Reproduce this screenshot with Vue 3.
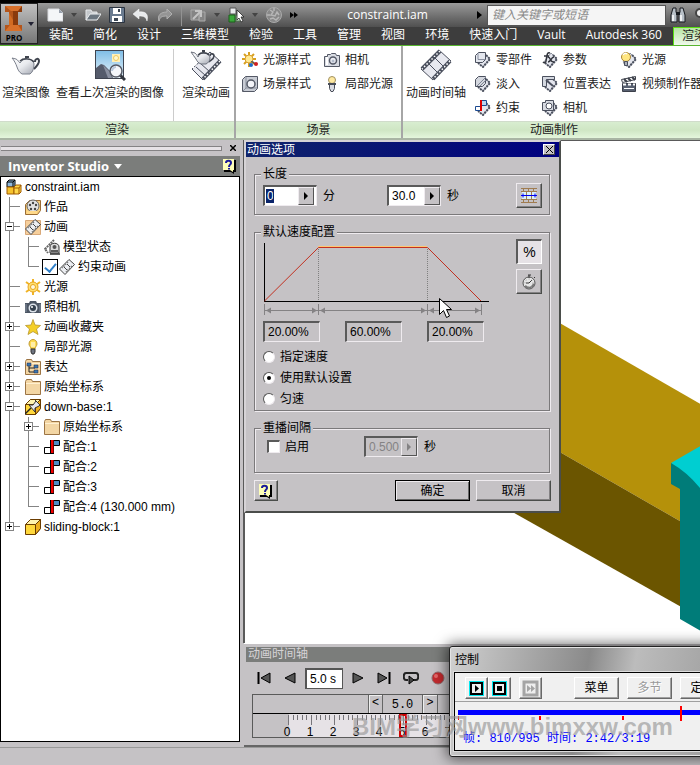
<script setup>
import { ref } from 'vue'

const tabs = ['装配', '简化', '设计', '三维模型', '检验', '工具', '管理', '视图', '环境', '快速入门', 'Vault', 'Autodesk 360']

const sceneTools = [
  { icon: 'light-style', label: '光源样式' },
  { icon: 'camera', label: '相机' },
  { icon: 'scene-style', label: '场景样式' },
  { icon: 'spot', label: '局部光源' }
]

const animationTools = [
  { icon: 'a-part', label: '零部件' },
  { icon: 'a-param', label: '参数' },
  { icon: 'a-light', label: '光源' },
  { icon: 'a-fade', label: '淡入' },
  { icon: 'a-pos', label: '位置表达' },
  { icon: 'clapper', label: '视频制作器' },
  { icon: 'a-constraint', label: '约束' },
  { icon: 'a-camera', label: '相机' }
]

// guides: t = tee, l = pass-through line, e = last child, + / - = toggles, p = last toggle
const tree = [
  { guides: '', icon: 'assembly', label: 'constraint.iam' },
  { guides: 't', icon: 'reel', label: '作品' },
  { guides: '-', icon: 'film-folder', label: '动画' },
  { guides: 'lt', icon: 'model-state', label: '模型状态' },
  { guides: 'le', icon: 'film-small', label: '约束动画', check: true },
  { guides: 't', icon: 'sun', label: '光源' },
  { guides: 't', icon: 'photo', label: '照相机' },
  { guides: '+', icon: 'star', label: '动画收藏夹' },
  { guides: 't', icon: 'bulb', label: '局部光源' },
  { guides: '+', icon: 'rep-folder', label: '表达' },
  { guides: '+', icon: 'folder', label: '原始坐标系' },
  { guides: '-', icon: 'pinned', label: 'down-base:1' },
  { guides: 'l+', icon: 'folder', label: '原始坐标系' },
  { guides: 'lt', icon: 'mate', label: '配合:1' },
  { guides: 'lt', icon: 'mate', label: '配合:2' },
  { guides: 'lt', icon: 'mate', label: '配合:3' },
  { guides: 'le', icon: 'mate', label: '配合:4 (130.000 mm)' },
  { guides: 'p', icon: 'part', label: 'sliding-block:1' }
]

const isToggle = (g) => '+-p'.includes(g)
const minutes = ref('0')
const seconds = ref('30.0')
const interval = ref('0.500')
const speeds = ref(['20.00%', '60.00%', '20.00%'])
const mode = ref('使用默认设置')
const modes = ['指定速度', '使用默认设置', '匀速']
const repeat = ref(false)
const current = ref('5.0 s')
const ticks = Array.from({ length: 50 }, (_, i) => i)
</script>

<template>
  <div class="app">
    <svg width="0" height="0" class="defs" aria-hidden="true">
      <defs>
        <linearGradient id="pot" x1="0" y1="0" x2="1" y2="1"><stop offset="0" stop-color="#fff" /><stop offset="0.500" stop-color="#e8eaee" /><stop offset="1" stop-color="#a4a8b2" /></linearGradient>
        <linearGradient id="sky" x1="0" y1="0" x2="0" y2="1"><stop offset="0" stop-color="#7fbde6" /><stop offset="1" stop-color="#eaf5fb" /></linearGradient>
      </defs>
      <symbol id="teapot" viewBox="0 0 32 32">
        <path d="M25 13c0-4 4-4 4-1s-2 5-5 8" fill="none" stroke="#3f444e" stroke-width="2" />
        <path d="M2 9l4 1c2 1 3 3 4 4 2-3 4-4 7-4s7 2 7 5c0 4-1 8-4 10h-8c-3-2-4-4-5-7C6 15 4 11 2 9z" fill="url(#pot)" stroke="#7b808c" />
        <path d="M10 12c3-3 11-3 14 1" fill="none" stroke="#3f444e" stroke-width="1.500" /><path d="M15 7h4v2h-4z" fill="#3f444e" />
      </symbol>
      <symbol id="viewimg" viewBox="0 0 32 32">
        <rect x="1.500" y="1.500" width="28" height="28" fill="url(#sky)" stroke="#3f4450" />
        <path d="M18 5h8v8h-8z" fill="#fff0b8" /><circle cx="22" cy="9" r="2.500" fill="#fff8d0" stroke="#f0c860" />
        <path d="M2 19l5-4 3 1 6 6 3 7H2z" fill="#555b6b" /><path d="M9 16l7 7 2 6h-4z" fill="#8a90a0" />
        <path d="M26 26l5 5" stroke="#33363e" stroke-width="3" /><circle cx="22" cy="22" r="6" fill="#f4f6fa" stroke="#555a66" stroke-width="1.500" />
        <path d="M18 22c0-2 2-4 4-4" stroke="#b8c8dc" fill="none" stroke-width="2" />
      </symbol>
      <symbol id="film" viewBox="0 0 32 32">
        <path d="M19 1L31 12 13 31 1 20z" fill="#e8e9f0" stroke="#4b505e" />
        <path d="M20 2L2 20M30 12L13 30" stroke="#4b505e" stroke-width="4" />
        <path d="M20 2L2 20M30 12L13 30" stroke="#fff" stroke-width="1.500" stroke-dasharray="1.500 2" />
        <path d="M14 8l10 10M8 14l10 10" stroke="#4b505e" />
      </symbol>
      <symbol id="render-anim" viewBox="0 0 32 32">
        <path d="M20 3L31 13 13 31 2 20z" fill="#e8e9f0" stroke="#4b505e" />
        <path d="M30 12L13 30" stroke="#4b505e" stroke-width="4" /><path d="M30 12L13 30M3 19l5-5" stroke="#fff" stroke-width="1.500" stroke-dasharray="1.500 2" />
        <path d="M10 14l10 9M6 18l10 9" stroke="#4b505e" />
        <path d="M20 7c0-3 4-3 4 0s-3 4-5 6" stroke="#3f444e" fill="none" stroke-width="1.500" />
        <path d="M1 3l4 1c1 1 2 2 3 4 1-3 3-4 6-4s6 2 6 5-2 5-4 6h-5c-3-1-4-3-5-5C4 8 3 5 1 3z" fill="url(#pot)" stroke="#6b707c" />
        <path d="M8 6c3-3 8-3 11 0" stroke="#3f444e" fill="none" stroke-width="1.500" /><path d="M12 1h3v2h-3z" fill="#3f444e" />
      </symbol>
      <symbol id="light-style" viewBox="0 0 16 16">
        <path d="M7 0v15M0 7h14M2 2l10 10M12 2L2 12" stroke="#d8a020" stroke-width="2" /><circle cx="7" cy="7" r="4" fill="#ffe890" stroke="#d8a030" />
        <path d="M9 10c3-2 4 5 6 1" fill="none" stroke="#555" stroke-width="1.500" /><circle cx="9" cy="13" r="2" fill="#1e6cc8" /><circle cx="14" cy="12" r="2" fill="#d02020" />
      </symbol>
      <symbol id="camera" viewBox="0 0 16 16">
        <path d="M0.500 4.500h3v-2h3l1-1h4l1 2h3v11h-15z" fill="#d8dbe2" stroke="#545966" /><path d="M3 5v8" stroke="#fff" stroke-width="2" />
        <circle cx="9" cy="8.500" r="3.500" fill="#eef0f6" stroke="#545966" stroke-width="1.500" /><circle cx="9" cy="9" r="1.500" fill="#b4bccb" />
      </symbol>
      <symbol id="scene-style" viewBox="0 0 16 16">
        <path d="M0.500 3.500l3-3h12v12l-3 3h-12z" fill="#c8ccd4" stroke="#545966" /><path d="M4 1v11h11M4 12l-3 3" fill="none" stroke="#8a909c" />
        <circle cx="9" cy="8" r="4" fill="#f4f5f9" stroke="#545966" stroke-width="1.500" />
      </symbol>
      <symbol id="spot" viewBox="0 0 16 16">
        <circle cx="8" cy="4" r="3.500" fill="#ffe9a0" stroke="#a09060" /><path d="M5.500 7.500h5v5l-1.500 3h-2l-1.500-3z" fill="#d9dbe2" stroke="#484c58" /><path d="M4 8h8" stroke="#484c58" stroke-width="2" />
      </symbol>
      <symbol id="dia" viewBox="0 0 16 16">
        <path d="M9 1l6 6-7 8-6-5z" fill="#e4e6ee" stroke="#8b909c" /><path d="M11 3l4 4-7 8-5-4" stroke="#4b505e" stroke-width="2" stroke-dasharray="2 1" fill="none" />
      </symbol>
      <symbol id="a-part" viewBox="0 0 16 16"><use href="#dia" /><path d="M0.500 3.500l3-3h7v7l-3 3h-7z" fill="#e4e7ee" stroke="#4b505e" /><path d="M3 1v6.500h7" fill="none" stroke="#8a90a0" /></symbol>
      <symbol id="a-fade" viewBox="0 0 16 16"><use href="#dia" /><path d="M0.500 3.500l3-3h7v7l-3 3h-7z" fill="#d4d7de" stroke="#4b505e" /><path d="M2 10L11 1M5 10l6-6" stroke="#7d8494" /></symbol>
      <symbol id="a-constraint" viewBox="0 0 16 16"><use href="#dia" /><path d="M6.500 0.500h5v5h-5z" fill="#b8d4f0" stroke="#1c4a90" /><path d="M0.500 6.500h5v4h-5z" fill="#fff" stroke="#1c4a90" /><path d="M6 0v11" stroke="#e00000" stroke-width="2" /></symbol>
      <symbol id="a-param" viewBox="0 0 16 16"><use href="#dia" /><path d="M8 1C5 0 5 3 4 9c0 2-2 2-3 1M2 4h5M6 5c3 0 2 6 6 5M12 5c-3 0-3 5-6 5" fill="none" stroke="#33363e" stroke-width="1.500" /></symbol>
      <symbol id="a-pos" viewBox="0 0 16 16"><use href="#dia" /><path d="M0.500 0.500h12v3h-8v7h-4z" fill="#d4d8e0" stroke="#4b505e" /><path d="M4 4l7 6" stroke="#4b505e" stroke-width="2" /></symbol>
      <symbol id="a-camera" viewBox="0 0 16 16"><use href="#dia" /><path d="M0.500 2.500h3v-2h8v10h-11z" fill="#d8dbe2" stroke="#4b505e" /><circle cx="7" cy="6" r="3" fill="#fff" stroke="#4b505e" /></symbol>
      <symbol id="a-light" viewBox="0 0 16 16"><use href="#dia" /><circle cx="5" cy="5" r="4.500" fill="#ffe680" stroke="#a88430" /><path d="M2 3c1-2 3-2 4-1" stroke="#fff" fill="none" stroke-width="1.500" /><path d="M3.500 9.500h3v4h-3z" fill="#aab0bb" stroke="#4b505e" /></symbol>
      <symbol id="clapper" viewBox="0 0 16 16"><path d="M0.500 3.500l14-3v3l-13 3z" fill="#fff" stroke="#3c404a" /><path d="M3 3l3 3M7 2l3 3M11 1l3 3" stroke="#3c404a" stroke-width="2" /><path d="M1.500 7.500h13v8h-13z" fill="#586070" stroke="#3c404a" /><path d="M2 8.500h12" stroke="#fff" stroke-width="2" stroke-dasharray="3 2" /><path d="M3 12.500h10" stroke="#fff" /></symbol>

      <symbol id="new" viewBox="0 0 16 16"><path d="M1 2h11l4 4v8H1z" fill="#f4f6f8" stroke="#d8dade" /><path d="M12 2v4h4z" fill="#9aa2ae" /></symbol>
      <symbol id="open" viewBox="0 0 16 16"><path d="M1 13V3h5l1 2h5v2" fill="#c4c8cc" stroke="#e8eaec" /><path d="M1 13L5 7h11l-4 6z" fill="#6b7680" stroke="#f0f2f4" /></symbol>
      <symbol id="save" viewBox="0 0 16 16"><path d="M0.500 0.500h15v15h-15z" fill="#6a7b90" stroke="#2c3440" /><path d="M4 1h8v6H4zM3 9h10v6H3z" fill="#fff" /><path d="M9 2h2v3H9zM5 11h4v3H5z" fill="#3c4654" /></symbol>
      <symbol id="undo" viewBox="0 0 16 16"><path d="M6 2v3c6-1 10 2 8 9-1-4-3-5-8-5v3L0 7z" fill="#e8eaec" stroke="#fff" stroke-width="0.500" /></symbol>
      <symbol id="redo" viewBox="0 0 16 16"><path d="M10 2v3C4 5 0 8 2 14c1-4 3-5 8-5v3l5-5z" fill="#959595" stroke="#b0b0b0" /></symbol>
      <symbol id="update" viewBox="0 0 16 16"><path d="M1 3h9l-1 10H1zM9 5h6v9H9z" fill="#858585" stroke="#aaa" /><path d="M3 12l8-8M5 4h6v6" stroke="#c4c4c4" stroke-width="2" fill="none" /></symbol>
      <symbol id="select" viewBox="0 0 16 16"><path d="M2 1h6v6H2z" fill="#e8eaec" stroke="#555" /><path d="M1 8h6v7H1z" fill="#3aa83a" stroke="#1b601b" /><path d="M8 8h5v6H8z" fill="#e0e8e0" stroke="#4b7b4b" /><path d="M9 3v10l2-2 2 4 2-1-2-4h3z" fill="#fff" stroke="#222" stroke-width="0.800" /></symbol>
      <symbol id="sphere" viewBox="0 0 16 16"><circle cx="8" cy="8" r="7.500" fill="#888" stroke="#aaa" /><path d="M4 3l3 2-2 3 4 1 2-4 2 3M4 12l3-1 3 2 3-3M1 8h3M8 1v3" stroke="#b6b6b6" fill="none" stroke-width="1.500" /></symbol>
      <symbol id="binoc" viewBox="0 0 16 16"><path d="M3 1h3v4l1 2v8H1V8zM13 1h-3v4L9 7v8h6V8z" fill="#b8c0c8" stroke="#16191e" /><path d="M6 5h4v3H6z" fill="#16191e" /><path d="M3 8v6M11 8v6" stroke="#fff" stroke-width="1.500" /></symbol>
      <symbol id="logo" viewBox="0 0 20 28"><path d="M1 1h17v6h-4v13h4v6H1v-6h4V7H1z" fill="#b4551a" /><path d="M7 1h11v6h-4v13h-5V7z" fill="#8a3a0c" /><path d="M1 1l6 5h7l4-5zM1 26l5-6h8l4 6z" fill="#d8702a" /><path d="M5 8l4 7v5H5z" fill="#d26b22" /></symbol>

      <symbol id="assembly" viewBox="0 0 16 16"><path d="M1 3l2-2h6v7H1z" fill="#8fb8dc" stroke="#000" /><path d="M1 3h6v5M7 3l2-2" fill="none" stroke="#000" /><path d="M1 8h7v7H1z" fill="#f6c22c" stroke="#a05a00" /><path d="M8 8l2-2h5v7l-2 2H8z" fill="#ffd84a" stroke="#a05a00" /><path d="M8 9h5v6M13 9l2-3" fill="none" stroke="#a05a00" /></symbol>
      <symbol id="folder" viewBox="0 0 16 16"><path d="M0.500 15.500v-13l1-2h5l1 2h8v13z" fill="#f3d6a4" stroke="#9c7444" /><path d="M1 4.500h14" stroke="#fff0d0" /></symbol>
      <symbol id="rep-folder" viewBox="0 0 16 16"><use href="#folder" /><path d="M4 7v6h5M4 9h6" fill="none" stroke="#222" /><path d="M2 4h4v3H2zM9 6h4v3H9zM9 11h4v3H9z" fill="#3b78ae" stroke="#224" stroke-width="0.500" /></symbol>
      <symbol id="reel" viewBox="0 0 16 16"><path d="M0.500 5.500l4-4h11v10l-3 4h-12z" fill="#f8cf7c" stroke="#9a6c34" /><circle cx="8" cy="7" r="6" fill="#e2e2e2" stroke="#666" /><g fill="#444"><circle cx="8" cy="4" r="1.200" /><circle cx="5" cy="6" r="1.200" /><circle cx="11" cy="6" r="1.200" /><circle cx="6" cy="10" r="1.200" /><circle cx="10" cy="10" r="1.200" /></g><path d="M2 13.500h10" stroke="#ffd98a" stroke-width="3" /></symbol>
      <symbol id="film-small" viewBox="0 0 16 16"><path d="M10 0.500l5.500 5L6 15.500.5 10z" fill="#eceef2" stroke="#444" /><path d="M9 3L3 9M13 7l-6 6" stroke="#777" stroke-width="1.500" stroke-dasharray="1.500 1" /><path d="M8 5l3 3M5 8l3 3" stroke="#444" /></symbol>
      <symbol id="film-folder" viewBox="0 0 16 16"><path d="M0.500 15.500v-14h15v14z" fill="#f6cf9c" stroke="#d8a878" /><use href="#film-small" /></symbol>
      <symbol id="model-state" viewBox="0 0 16 16"><path d="M10 1L1 10l3 4" fill="none" stroke="#666" stroke-width="2" stroke-dasharray="2 0.700" /><path d="M6 14V8c0-5 9-5 9 0v6z" fill="#ddd" stroke="#333" /><circle cx="10.500" cy="8" r="2" fill="#555" /><path d="M7 12h7M6 15h10" stroke="#333" stroke-width="1.500" /></symbol>
      <symbol id="sun" viewBox="0 0 16 16"><path d="M8 0v16M1 3l14 10M1 13L15 3" stroke="#f0b428" stroke-width="2" /><circle cx="8" cy="8" r="5" fill="#ffdf70" stroke="#e8a41c" /><circle cx="8" cy="8" r="2.500" fill="#fff8dc" stroke="#e8a41c" /></symbol>
      <symbol id="photo" viewBox="0 0 16 16"><path d="M0 4h4l1-2h6l1 2h4v10H0z" fill="#4c5664" /><path d="M1 5v8M15 5v8" stroke="#8490a0" /><circle cx="8" cy="9" r="4.500" fill="#dde3ea" /><circle cx="8" cy="9" r="3" fill="#34404e" /><circle cx="7" cy="8" r="1" fill="#fff" /></symbol>
      <symbol id="star" viewBox="0 0 16 16"><path d="M8 0.500l2 5.500 5.500 0.500-4 3.500 1.500 5.500-5-3-5 3L4.500 10l-4-3.500L6 6z" fill="#f4cf28" stroke="#b8952c" stroke-width="0.800" /></symbol>
      <symbol id="bulb" viewBox="0 0 16 16"><path d="M4 5c0-6 8-6 8 0 0 2-2 3-2 5H6C6 8 4 7 4 5z" fill="#ffdc50" stroke="#c09a30" /><path d="M7 3v5M9 3v5" stroke="#fff" /><path d="M6 10h4v3l-1 2H7l-1-2z" fill="#6e7480" stroke="#333" /></symbol>
      <symbol id="part" viewBox="0 0 16 16"><path d="M0.500 5.500l5-5h10v9l-5 6h-10z" fill="#ffd83c" stroke="#6a3c00" /><path d="M5.500 0.500h10l-5 5h-10z" fill="#fff4b0" stroke="#6a3c00" /><path d="M10.500 5.500v10l5-6v-9z" fill="#eeb020" stroke="#6a3c00" /></symbol>
      <symbol id="pinned" viewBox="0 0 16 16"><use href="#part" /><path d="M0 15l6-6" stroke="#222" stroke-width="1.500" /><path d="M4 6l4 0 3-4-1-1 5 5-1 1-4 2v4z" fill="#e6e8ec" stroke="#333" /></symbol>
      <symbol id="mate" viewBox="0 0 16 16"><path d="M8 1.500h7.500v5H8z" fill="#4f8cc4" stroke="#000" /><path d="M7 8.500H.5v6H7z" fill="#fff" stroke="#000" /><path d="M6 1h4v14H6z" fill="#000" /><path d="M7 1h2.500v13H7z" fill="#f00000" /></symbol>
      <symbol id="help" viewBox="0 0 16 16"><path d="M2 2h12v12h-2v2l-3-2H2z" fill="#000" /><path d="M1 1h11v11h-1v2l-3-2H1z" fill="#ffffb8" /><path d="M4 5c0-3 5-3 5 0 0 2-2 1-2 4M7 10v1.500" fill="none" stroke="#1a1a9a" stroke-width="2" /></symbol>
    </svg>

    <header class="top">
      <button class="app-button" aria-label="PRO">
        <span class="app-mark"><svg width="20" height="28"><use href="#logo" /></svg>PRO</span>
        <i class="down"></i>
      </button>
      <div class="bars">
        <div class="quick">
          <button class="ic" aria-label="新建"><svg><use href="#new" /></svg></button><i class="down dim"></i>
          <button class="ic" aria-label="打开"><svg><use href="#open" /></svg></button>
          <button class="ic" aria-label="保存"><svg><use href="#save" /></svg></button>
          <button class="ic" aria-label="撤消"><svg><use href="#undo" /></svg></button>
          <button class="ic" aria-label="重做"><svg><use href="#redo" /></svg></button>
          <i class="sep"></i>
          <button class="ic" aria-label="更新"><svg><use href="#update" /></svg></button><i class="down dim"></i>
          <button class="ic" aria-label="选择"><svg><use href="#select" /></svg></button><i class="down dim"></i>
          <button class="ic" aria-label="外观"><svg><use href="#sphere" /></svg></button>
          <svg class="more" width="8" height="8"><path d="M0 1l4 3-4 3zM4 1l4 3-4 3z" /></svg>
          <span class="doc">constraint.iam</span>
          <svg class="go" width="5" height="8"><path d="M0 0l5 4-5 4z" /></svg>
          <input class="search" type="text" placeholder="键入关键字或短语" aria-label="搜索">
          <button class="ic" aria-label="查找"><svg><use href="#binoc" /></svg></button>
          <svg class="key" width="12" height="16"><circle cx="6" cy="6" r="4" fill="#eee" stroke="#444" stroke-width="2" /></svg>
        </div>
        <nav class="tabs">
          <a v-for="t in tabs" :key="t" href="#">{{ t }}</a>
          <a href="#" class="active">渲染</a>
        </nav>
      </div>
    </header>

    <section class="ribbon">
      <div class="panel render">
        <div class="tools">
          <button class="big"><svg><use href="#teapot" /></svg>渲染图像</button>
          <button class="big"><svg><use href="#viewimg" /></svg>查看上次渲染的图像</button>
          <i class="rule"></i>
          <button class="big"><svg><use href="#render-anim" /></svg>渲染动画</button>
        </div>
        <h2>渲染</h2>
      </div>
      <div class="panel scene-panel">
        <div class="tools">
          <div class="grid two">
            <button v-for="t in sceneTools" :key="t.label" class="small"><svg><use :href="'#' + t.icon" /></svg>{{ t.label }}</button>
          </div>
        </div>
        <h2>场景</h2>
      </div>
      <div class="panel anim">
        <div class="tools">
          <button class="big"><svg><use href="#film" /></svg>动画时间轴</button>
          <div class="grid three">
            <button v-for="t in animationTools" :key="t.icon" class="small"><svg><use :href="'#' + t.icon" /></svg>{{ t.label }}</button>
          </div>
        </div>
        <h2>动画制作</h2>
      </div>
    </section>

    <main class="work">
      <aside class="browser">
        <div class="grip"><i></i><button class="x" aria-label="关闭"><svg width="6" height="6"><path d="M0 0l6 6M6 0L0 6" stroke="#000" stroke-width="1.500" /></svg></button></div>
        <div class="browser-head">
          <button class="studio">Inventor Studio <i></i></button>
          <button class="ic" aria-label="帮助"><svg><use href="#help" /></svg></button>
        </div>
        <ul class="tree">
          <li v-for="(n, i) in tree" :key="i">
            <component :is="isToggle(g) ? 'button' : 'span'" v-for="(g, k) in n.guides" :key="k" class="guide" :aria-label="isToggle(g) ? '展开或折叠' : null">
              <svg width="19" height="20">
                <path :d="g === 'e' || g === 'p' ? 'M4.5 0V10' : 'M4.5 0V20'" stroke="#848484" />
                <path v-if="g !== 'l'" d="M4 9.500H15" stroke="#848484" />
                <template v-if="isToggle(g)">
                  <rect x="0.500" y="5.500" width="8" height="8" fill="#fff" stroke="#848484" />
                  <path d="M2 9.500h5" stroke="#000" />
                  <path v-if="g !== '-'" d="M4.500 7v5" stroke="#000" />
                </template>
              </svg>
            </component>
            <input v-if="n.check" type="checkbox" class="node-check" checked :aria-label="n.label">
            <svg class="node-icon"><use :href="'#' + n.icon" /></svg>
            <span>{{ n.label }}</span>
          </li>
        </ul>
      </aside>

      <div class="stage">
        <div class="viewport">
          <svg width="600" height="502" aria-hidden="true">
            <path d="M200 116L600 346V475L200 245z" fill="#b5910a" />
            <path d="M200 245L600 475V558L200 333z" fill="#6b5500" />
            <path d="M426 322L600 222V440L455 348z" fill="#00ced1" />
            <path d="M426 322Q442 331 455 347L600 431V573L435 478V348L426 343z" fill="#007c79" />
          </svg>
        </div>
        <section class="timeline">
          <h3>动画时间轴</h3>
          <div class="transport">
            <button aria-label="到开头"><svg width="14" height="12"><path d="M1.500 0v12" stroke="#000" stroke-width="2" /><path d="M13 1v10L4 6z" fill="#555" stroke="#000" /></svg></button>
            <button aria-label="倒播"><svg width="14" height="12"><path d="M12 1v10L2 6z" fill="#555" stroke="#000" /></svg></button>
            <input v-model="current" type="text" aria-label="当前时间">
            <button aria-label="播放"><svg width="14" height="12"><path d="M2 1v10l10-5z" fill="#555" stroke="#000" /></svg></button>
            <button aria-label="到结尾"><svg width="14" height="12"><path d="M12.500 0v12" stroke="#000" stroke-width="2" /><path d="M1 1v10l9-5z" fill="#555" stroke="#000" /></svg></button>
            <button aria-label="循环"><svg width="16" height="14"><path d="M5 9H3C0 9 0 2 3 2h10c3 0 3 7 0 7h-3" fill="none" stroke="#222" stroke-width="2" /><path d="M6 5l5 4-5 4z" fill="#444" stroke="#000" /></svg></button>
            <button aria-label="录制"><svg width="14" height="14"><circle cx="7" cy="7" r="6" fill="#c22a2e" stroke="#8e6a6c" /><circle cx="5" cy="5" r="2" fill="#e2686a" /></svg></button>
          </div>
          <div class="track">
            <div class="slider"><button aria-label="后退">&lt;</button><output>5.0</output><button aria-label="前进">&gt;</button></div>
            <div class="ruler">
              <svg width="240" height="23">
                <path d="M1 0h239v23H1z" fill="#e6e2e6" />
                <path v-for="t in ticks" :key="t" :d="`M${Math.round(t * 4.6)}.5 1V${t % 5 ? 6 : 11}`" stroke="#77757a" />
                <text v-for="n in 10" :key="n" :x="(n - 1) * 23 - 1" y="22">{{ n - 1 }}</text>
                <rect x="112" y="1" width="6" height="21" fill="none" stroke="#d00000" stroke-width="2" />
              </svg>
            </div>
          </div>
        </section>
      </div>
    </main>
    <footer class="status"></footer>

    <form class="dialog" role="dialog" aria-label="动画选项" @submit.prevent>
      <div class="caption"><span>动画选项</span><button type="button" aria-label="关闭"><svg width="7" height="7"><path d="M0 0l7 7M7 0L0 7" stroke="#000" /></svg></button></div>
      <div class="content">
        <fieldset class="length">
          <legend>长度</legend>
          <div class="line">
            <div class="spin"><input id="min" v-model="minutes" type="text" class="picked" size="1"><button type="button" aria-label="选择分"><svg width="4" height="8"><path d="M0 0l4 4-4 4z" /></svg></button></div>
            <label for="min">分</label>
            <div class="spin second"><input id="sec" v-model="seconds" type="text" size="4"><button type="button" aria-label="选择秒"><svg width="4" height="8"><path d="M0 0l4 4-4 4z" /></svg></button></div>
            <label for="sec">秒</label>
            <button type="button" class="square push" aria-label="适合动画长度">
              <svg width="18" height="15"><path d="M1 0.500h16M1 3.500h16M1 11.500h16M1 14.500h16" stroke="#a07c50" /><path d="M3.500 0v4M8.500 0v4M13.500 0v4M3.500 11v4M8.500 11v4M13.500 11v4" stroke="#a07c50" /><path d="M2 4h14v7H2z" fill="#d9f0fa" /><path d="M6.500 4v7M11.500 4v7" stroke="#a07c50" /><path d="M1 7.500h16M3 5.500v4M15 5.500v4" stroke="#0000f0" /></svg>
            </button>
          </div>
        </fieldset>

        <fieldset class="profile">
          <legend>默认速度配置</legend>
          <div class="profile-body">
            <div>
              <svg class="graph" width="228" height="76" aria-hidden="true">
                <path d="M55.500 6v53M164.500 6v53" stroke="#808080" stroke-dasharray="1 1" />
                <path d="M1 58.500H226M1.500 0v59" stroke="#000" />
                <path d="M55 3.500H164" stroke="#ffc870" />
                <path d="M1.500 58L55.500 4.500H164.500L218 58" fill="none" stroke="#c23020" />
                <path d="M1.500 61v11M55.500 61v11M164.500 61v11M218.500 61v11M2 67.500h217" stroke="#848284" />
                <path d="M3 67.500l5-3v6zM54 67.500l-5-3v6zM57 67.500l5-3v6zM163 67.500l-5-3v6zM166 67.500l5-3v6zM217 67.500l-5-3v6z" fill="#848284" />
              </svg>
              <div class="speeds"><input v-for="(s, i) in speeds" :key="i" v-model="speeds[i]" type="text" readonly :aria-label="'速度段 ' + (i + 1)"></div>
              <label v-for="m in modes" :key="m" class="radio"><input v-model="mode" type="radio" name="mode" :value="m">{{ m }}</label>
            </div>
            <div class="units">
              <button type="button" class="square sunken">%</button>
              <button type="button" class="square push" aria-label="时间"><svg width="16" height="16"><circle cx="8" cy="9" r="6" fill="#e6e6e6" stroke="#555" /><path d="M4 12c3 3 7 2 9-2" stroke="#777" stroke-width="2" fill="none" /><path d="M8 9l3-3M8 9H5M7 1h3M8 1v3M13 3l1 1" stroke="#333" /><circle cx="8" cy="9" r="4" fill="none" stroke="#999" stroke-dasharray="1 2" /></svg></button>
            </div>
          </div>
        </fieldset>

        <fieldset class="replay">
          <legend>重播间隔</legend>
          <div class="line">
            <label class="check"><input v-model="repeat" type="checkbox">启用</label>
            <div class="spin off"><input id="gap" v-model="interval" type="text" size="5" disabled><button type="button" disabled aria-label="选择间隔"><svg width="4" height="8"><path d="M0 0l4 4-4 4z" /></svg></button></div>
            <label for="gap">秒</label>
          </div>
        </fieldset>

        <div class="actions">
          <button type="button" class="push help" aria-label="帮助"><svg width="16" height="16"><use href="#help" /></svg></button>
          <button type="submit" class="push default">确定</button>
          <button type="button" class="push">取消</button>
        </div>
      </div>
    </form>

    <section class="control">
      <h3>控制</h3>
      <div class="pane">
        <div class="buttons">
          <button class="key-btn" aria-label="播放"><svg width="17" height="17"><path d="M1 1h15v15H1z" fill="#00e8f0" /><rect x="3" y="3" width="11" height="11" fill="#f0f0f0" stroke="#000" stroke-width="2" /><path d="M7 5l4 3.500L7 12z" /></svg></button>
          <button class="key-btn" aria-label="停止"><svg width="17" height="17"><path d="M1 1h15v15H1z" fill="#00e8f0" /><rect x="3" y="3" width="11" height="11" fill="#f0f0f0" stroke="#000" stroke-width="2" /><path d="M6 6h5v5H6z" /></svg></button>
          <button class="key-btn fast" disabled aria-label="快进"><svg width="17" height="17"><rect x="2" y="2" width="13" height="13" fill="#eee" stroke="#a4a4a4" stroke-width="3" /><path d="M5 5l4 3.500L5 12zM9 5l4 3.500L9 12z" fill="#a4a4a4" /></svg></button>
          <button class="word menu">菜单</button>
          <button class="word" disabled>多节</button>
          <button class="word">定制</button>
        </div>
        <svg class="progress" width="290" height="17" aria-hidden="true"><path d="M0 4h290v5H0z" fill="#0000ff" /><path d="M0 10v4M82 10v4M165 10v4M223 0v15" stroke="#ff0000" stroke-width="2" /></svg>
        <p>帧: 810/995 时间: 2:42/3:19</p>
      </div>
    </section>

    <div class="watermark">BIM学习网<span>www.bimxxw.com</span></div>
    <svg class="cursor" width="14" height="22" aria-hidden="true"><path d="M1.500 1.500v16l4-4 3 7 3-1.500-3-6.500h5z" fill="#fff" stroke="#000" /></svg>
  </div>
</template>

<style>
html, body { margin: 0; overflow: hidden; background: #c5c2c5; }
</style>

<style scoped>
* { box-sizing: border-box; }
.app {
  position: relative; display: flex; flex-direction: column; min-height: 100vh; overflow: hidden;
  background: #c5c2c5; color: #000; font: 12px/14px "Liberation Sans", "Noto Sans CJK SC", sans-serif;
}
.defs { display: block; }
button, input { font: inherit; color: inherit; margin: 0; padding: 0; border: 0; background: none; border-radius: 0; outline: 0; min-width: 0; }
h2, h3, p, ul { margin: 0; padding: 0; font-size: 12px; font-weight: normal; }
a { color: inherit; text-decoration: none; }
.ic, .ic svg { display: block; width: 16px; height: 16px; flex: none; }

.top { display: flex; height: 46px; padding-top: 3px; background: linear-gradient(#000 3px, #3d3d3d 3px); border-bottom: 1px solid #58b530; flex: none; }
.app-button { display: flex; align-items: center; justify-content: center; gap: 4px; width: 38px; flex: none; height: 41px; background: linear-gradient(#c0c0c0, #777); border: 1px solid #222; }
.app-mark { display: flex; flex-direction: column; align-items: center; font: bold 8px/9px "Open Sans", sans-serif; }
.down { width: 0; height: 0; border: 3px solid transparent; border-top: 4px solid #223; border-bottom: 0; flex: none; }
.bars { flex: 1; min-width: 0; }
.quick { display: flex; align-items: center; gap: 8px; height: 24px; padding-left: 9px; background: linear-gradient(#9a9a9a, #6c6c6c 60%, #505050); }
.quick > * { flex: none; }
.dim { border-top-color: #444; }
.sep { width: 1px; height: 22px; background: #929292; }
.more, .go { fill: #000; }
.quick .doc { flex: 1; text-align: center; color: #fff; font: 12px/18px "Open Sans", sans-serif; }
.search { width: 179px; height: 21px; padding: 0 4px; background: #f5f5f5; border: 1px solid #555; font-style: italic; }
.search::placeholder { color: #888; opacity: 1; }
.go + .search { margin-left: -3px; }
.search + .ic { margin-left: -4px; }
.quick .key { margin-right: -6px; }
.tabs { display: flex; height: 18px; padding-left: 1px; color: #fff; font: 12px/16px "Open Sans", "Noto Sans CJK SC", sans-serif; white-space: nowrap; }
.tabs a { padding: 0 10px; flex: none; }
.tabs .active { height: 18px; padding: 0 8px; margin-left: 1px; color: #222; background: linear-gradient(#b6e4a4, #f0f8ec); border: 1px solid #58e010; border-bottom: 0; }

.ribbon { display: flex; height: 94px; flex: none; background: #fff; color: #222; border-bottom: 2px solid #a9b5a4; white-space: nowrap; }
.panel { display: flex; flex-direction: column; flex: none; border-right: 2px solid #a6a6a6; }
.render { width: 236px; }
.scene-panel { width: 167px; }
.anim { width: 304px; }
.tools { display: flex; flex: 1; padding-top: 3px; }
.panel h2 { height: 17px; line-height: 16px; text-align: center; background: linear-gradient(#d8edd0, #cfe6c4 50%, #e4f6dc); border-top: 1px solid #d0dccb; }
.big { display: flex; flex-direction: column; align-items: center; gap: 4px; padding: 0 2px; line-height: 16px; height: 70px; margin-right: 2px; flex: none; }
.big svg { width: 32px; height: 32px; }
.rule { width: 1px; height: 72px; margin: 0 6px 0 5px; background: #ccc; }
.grid { display: grid; grid-auto-rows: 24px; align-content: start; }
.two { grid-template-columns: 82px 80px; padding-left: 6px; }
.anim .big { margin: 0 3px 0 1px; }
.three { grid-template-columns: 67px 79px 86px; padding-left: 4px; }
.small { display: flex; align-items: center; gap: 5px; height: 22px; text-align: left; }
.small svg { width: 16px; height: 16px; flex: none; }

.work { display: flex; flex: 1; min-height: 0; }
.browser { display: flex; flex-direction: column; width: 240px; margin: 0 3px 5px 0; flex: none; }
.grip { display: flex; align-items: center; gap: 6px; height: 16px; padding: 0 2px 0 1px; }
.grip i { flex: 1; height: 5px; border: 1px solid #848284; border-left: 0; background: #e6e2e6; }
.x { display: grid; place-items: center; width: 10px; height: 10px; }
.browser-head { display: flex; align-items: center; justify-content: space-between; height: 20px; padding: 0 2px 0 8px; background: #7b7d7b; }
.studio { display: flex; align-items: center; gap: 5px; color: #fff; font: bold 13px/18px "Open Sans", sans-serif; }
.studio i { border: 4px solid transparent; border-top: 5px solid #fff; border-bottom: 0; }
.tree { flex: 1; list-style: none; background: #fff; border: 1px solid #000; padding-left: 4px; white-space: nowrap; }
.tree li { display: flex; align-items: center; height: 20px; }
.guide, .guide svg { display: block; width: 19px; height: 20px; flex: none; }
.node-icon { width: 16px; height: 16px; margin: 0 3px 0 1px; flex: none; }
.node-check { appearance: none; width: 16px; height: 16px; margin: 0 0 0 -1px; border: 1px solid #000; background: #fff; display: grid; place-items: center; }
.node-check:checked::before { content: ""; width: 5px; height: 9px; border: solid #2f7fc8; border-width: 0 2px 2px 0; transform: rotate(40deg); margin-bottom: 2px; }

.stage { display: flex; flex-direction: column; flex: 1; min-width: 0; }
.viewport { flex: 1; min-height: 0; overflow: hidden; background: #fff; border: solid #5a5a5a; border-width: 1px 0 0 2px; }
.viewport svg { display: block; }
.timeline { height: 104px; flex: none; margin-left: 1px; padding: 3px 2px; border: solid #666; border-width: 0 0 2px; border-top: 1px solid #fff; background: #c5c2c5; overflow: hidden; }
.timeline h3 { height: 15px; padding-left: 2px; background: #7b7d7b; color: #d6d3d6; }
.transport { display: flex; align-items: center; gap: 12px; height: 32px; padding-left: 11px; }
.transport button, .transport svg { display: block; flex: none; }
.transport input { width: 38px; height: 21px; padding-left: 3px; background: #fff; border: solid #555; border-width: 2px 1px 1px 2px; margin: 0 -4px; }
.track { border: solid #5a5a5a; border-width: 1px 0 1px 1px; margin-left: 6px; height: 44px; }
.slider { display: flex; height: 19px; padding-left: 115px; border-bottom: 1px solid #000; }
.slider button { width: 15px; border: solid #666; border-width: 0 1px 0 0; box-shadow: inset 1px 1px #eee; line-height: 12px; padding-bottom: 4px; }
.slider button:first-child { border-left: 1px solid #666; }
.slider output { width: 40px; text-align: center; line-height: 20px; border-right: 1px solid #666; font-family: "Liberation Mono", monospace; }
.ruler { height: 23px; padding-left: 35px; }
.ruler svg { display: block; overflow: visible; }
.ruler text { text-anchor: middle; font-size: 12px; }
.status { height: 18px; flex: none; border-top: 1px solid #999; }

.dialog { position: absolute; left: 244px; top: 140px; width: 317px; background: #c5c2c5; border: 2px solid; border-color: #d6d3d6 #4a4d4a #4a4d4a #d6d3d6; }
.caption { display: flex; align-items: center; justify-content: space-between; height: 15px; padding: 0 4px 0 1px; background: linear-gradient(90deg, #10246b, #000080); color: #fff; }
.caption button { display: grid; place-items: center; width: 12px; height: 11px; background: #c5c2c5; border: 1px solid; border-color: #fff #444 #444 #fff; }
.content { padding: 10px 8px; }
fieldset { min-width: 0; margin: 0 1px 10px 0; padding: 0 7px 0 8px; border: 1px solid #7b797b; box-shadow: 1px 1px #efebef, inset 1px 1px #efebef; }
legend { height: 14px; padding: 0 2px; margin-left: -2px; background: #c5c2c5; position: relative; }
.length { height: 48px; }
.profile { height: 186px; }
.replay { height: 52px; margin-bottom: 7px; }
.line { display: flex; gap: 6px; align-items: center; padding-top: 1px; }
.length .line { padding-top: 2px; }
.spin { display: flex; width: 54px; height: 21px; background: #fff; border: solid; border-width: 2px 1px 1px 2px; border-color: #5a5a5a #efebef #efebef #5a5a5a; }
.spin input { flex: 1; width: 30px; padding-left: 3px; }
.spin button { width: 16px; display: grid; place-items: center; background: #c5c2c5; border: 1px solid; border-color: #efebef #555 #555 #efebef; flex: none; }
.spin .picked { flex: none; width: 8px; margin: 2px 24px 2px 1px; padding: 0 1px; background: #0a246a; color: #fff; }
.second { margin-left: 46px; }
.spin.off { background: #c5c2c5; color: #848284; margin-left: 49px; }
.off svg { fill: #848284; }
.square { display: grid; place-items: center; width: 26px; height: 25px; margin-left: auto; flex: none; }
.push { background: #c5c2c5; border: 1px solid; border-color: #efebef #4a4d4a #4a4d4a #efebef; box-shadow: inset -1px -1px #848284; }
.sunken { background: #e6e2e6; border: solid; border-width: 2px 1px 1px 2px; border-color: #5a5a5a #fff #fff #5a5a5a; font-size: 14px; }
.profile-body { display: flex; justify-content: space-between; }
.graph { display: block; margin: 4px 0 2px; }
.speeds { display: flex; gap: 25px; margin-bottom: 4px; }
.speeds input { width: 57px; height: 21px; padding-left: 3px; border: solid; border-width: 2px 1px 1px 2px; border-color: #5a5a5a #efebef #efebef #5a5a5a; }
.radio { display: flex; align-items: center; gap: 5px; height: 21px; }
.radio input { appearance: none; display: grid; place-items: center; width: 12px; height: 12px; border: 1px solid; border-color: #555 #efebef #efebef #555; border-radius: 50%; background: #fff; }
.radio input:checked::before { content: ""; width: 4px; height: 4px; border-radius: 50%; background: #000; }
.units { display: flex; flex-direction: column; gap: 5px; }
.check { display: flex; align-items: center; gap: 5px; padding-left: 4px; }
.check input { appearance: none; width: 13px; height: 13px; background: #fff; border: solid; border-width: 2px 1px 1px 2px; border-color: #5a5a5a #efebef #efebef #5a5a5a; }
.actions { display: flex; gap: 6px; }
.actions button { width: 75px; height: 21px; }
.actions .help { display: grid; place-items: center; width: 24px; margin-right: auto; }
.actions .default { border-color: #000; box-shadow: inset 1px 1px #efebef, inset -1px -1px #666; }

.control { position: absolute; left: 449px; right: -45px; bottom: 8px; height: 111px; padding: 0 5px 5px; border: 1px solid #222; border-radius: 3px; background: linear-gradient(100deg, #d0d0d0, #8a8a8a 45%, #bcbcbc 60%, #949494); box-shadow: inset 0 0 0 1px #e4e4e4, 0 0 14px 2px rgba(0, 0, 0, .6); }
.control h3 { height: 25px; line-height: 26px; }
.pane { height: 79px; margin-left: -1px; background: #f0f0f0; border: 1px solid #000; box-shadow: 0 0 0 1px #ddd; }
.buttons { display: flex; height: 29px; padding: 4px 0 0 10px; border-bottom: 1px solid #a0a0a0; }
.buttons button { height: 22px; background: #f0f0f0; border: 1px solid; border-color: #fff #696969 #696969 #fff; box-shadow: inset -1px -1px #a0a0a0; flex: none; }
.key-btn { display: grid; place-items: center; width: 23px; }
.fast { margin-left: 8px; }
.word { width: 45px; margin-right: 8px; }
.word:disabled { color: #999; text-shadow: 1px 1px #fff; }
.menu { margin-left: 32px; }
.progress { display: block; margin: 4px 0 0 3px; }
.pane p { padding: 9px 0 0 8px; color: #0000ff; font-family: "Liberation Mono", "Noto Sans CJK SC", monospace; white-space: nowrap; }

.watermark { position: absolute; left: 352px; bottom: 24px; font: bold 24px/28px "Liberation Sans", "Noto Sans CJK SC", sans-serif; color: rgba(150, 150, 150, .65); white-space: nowrap; pointer-events: none; }
.cursor { position: absolute; left: 438px; top: 297px; pointer-events: none; }
</style>
